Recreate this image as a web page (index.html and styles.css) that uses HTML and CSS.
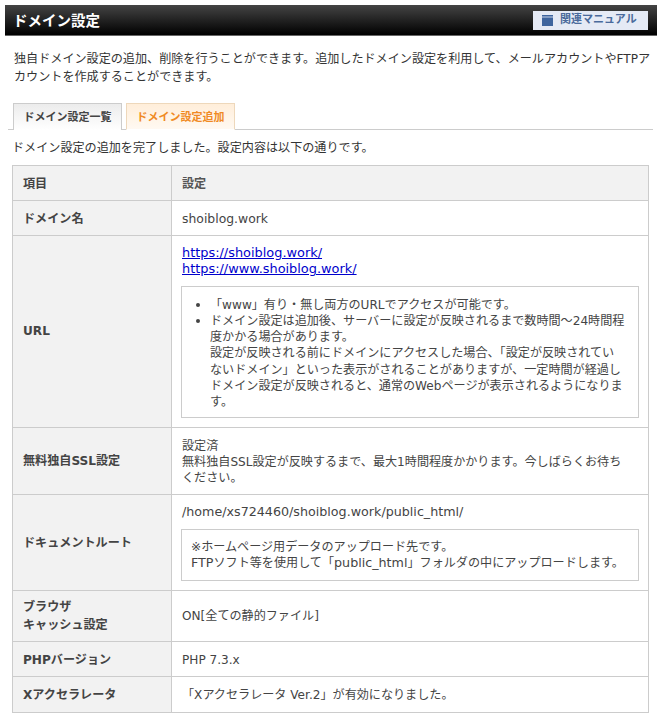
FILE: index.html
```html
<!DOCTYPE html>
<html lang="ja">
<head>
<meta charset="utf-8">
<title>ドメイン設定</title>
<link rel="stylesheet" href="styles.css">
</head>
<body>
<div class="header">
  <h1 class="title">ドメイン設定</h1>
  <a class="manual"><svg class="book" viewBox="0 0 11 11" width="11" height="11"><path d="M0 0H11V11H0Z" fill="#3f659e"/><path d="M0 2H11" stroke="#c9d5ea" stroke-width="1"/></svg>関連マニュアル</a>
</div>
<p class="lead">独自ドメイン設定の追加、削除を行うことができます。追加したドメイン設定を利用して、メールアカウントやFTPアカウントを作成することができます。</p>
<div class="tabs">
  <div class="tab">ドメイン設定一覧</div>
  <div class="tab active">ドメイン設定追加</div>
</div>
<p class="done">ドメイン設定の追加を完了しました。設定内容は以下の通りです。</p>
<table class="info">
  <tr class="r35"><th>項目</th><th class="head2">設定</th></tr>
  <tr class="r35"><th>ドメイン名</th><td class="host">shoiblog.work</td></tr>
  <tr><th>URL</th><td class="url">
    <a class="link" href="#">https://shoiblog.work/</a><br>
    <a class="link" href="#">https://www.shoiblog.work/</a>
    <div class="note list">
      <ul>
        <li>「www」有り・無し両方のURLでアクセスが可能です。</li>
        <li>ドメイン設定は追加後、サーバーに設定が反映されるまで数時間～24時間程度かかる場合があります。<br>設定が反映される前にドメインにアクセスした場合、「設定が反映されていないドメイン」といった表示がされることがありますが、一定時間が経過しドメイン設定が反映されると、通常のWebページが表示されるようになります。</li>
      </ul>
    </div>
  </td></tr>
  <tr><th>無料独自SSL設定</th><td class="narrow">設定済<br>無料独自SSL設定が反映するまで、最大1時間程度かかります。今しばらくお待ちください。</td></tr>
  <tr><th>ドキュメントルート</th><td><span class="path">/home/xs724460/shoiblog.work/public_html/</span>
    <div class="note">※ホームページ用データのアップロード先です。<br><span class="path">FTP</span>ソフト等を使用して「<span class="path">public_html</span>」フォルダの中にアップロードします。</div>
  </td></tr>
  <tr><th class="tall">ブラウザ<br>キャッシュ設定</th><td>ON[全ての静的ファイル]</td></tr>
  <tr class="r35"><th>PHPバージョン</th><td>PHP 7.3.x</td></tr>
  <tr class="r36"><th>Xアクセラレータ</th><td>「Xアクセラレータ Ver.2」が有効になりました。</td></tr>
</table>
</body>
</html>
```
FILE: styles.css
```css
* { box-sizing: border-box; }
html, body { margin: 0; padding: 0; background: #fff; }
body {
  width: 662px;
  height: 717px;
  overflow: hidden;
  padding-top: 5px;
  font-family: "DejaVu Sans", "Noto Sans CJK JP", sans-serif;
  font-size: 12.1px;
  line-height: 16.1px;
  color: #444;
}
.header {
  margin: 0 5px;
  height: 31px;
  display: flex;
  align-items: center;
  justify-content: space-between;
  padding: 0 9px 0 8px;
  background: linear-gradient(#444, #000);
  border-bottom: 1px solid #666;
}
.title { margin: 0; font-family: "Noto Sans CJK JP", sans-serif; font-size: 14.5px; font-weight: 700; color: #fff; }
.manual {
  display: flex;
  align-items: center;
  gap: 7px;
  width: 115px;
  height: 19px;
  padding-left: 9px;
  background: #e5eaf5;
  color: #4a6a9c;
  font-size: 11px;
  font-weight: 700;
}
.lead { margin: 14px 5px 0 14px; line-height: 18px; width: 644px; color: #333; }
.tabs {
  display: flex;
  gap: 4px;
  margin: 17px 9px 0 8px;
  padding-left: 5px;
  border-bottom: 1px solid #ccc;
  height: 27px;
}
.tab {
  width: 109px;
  height: 27px;
  text-align: center;
  line-height: 27px;
  font-size: 11px;
  background: linear-gradient(#ececec, #fff);
  border: 1px solid #ccc;
  border-bottom: 0;
  color: #444;
  font-weight: 700;
}
.tab.active {
  background: linear-gradient(#ffeeda, #fff9f2);
  border-color: #eed8bb;
  color: #f08a24;
  border-bottom: 1px solid #fff;
}
.done { margin: 10px 0 0 12px; line-height: 17px; color: #333; }
.info {
  margin: 8px 0 0 12px;
  width: 637px;
  border-collapse: collapse;
  table-layout: fixed;
}
.info th, .info td {
  border: 1px solid #ccc;
  padding: 9px 10px;
  text-align: left;
  font-weight: 400;
}
.info th { width: 159px; background: #f2f2f2; font-weight: 700; color: #444; }
.info th.head2 { width: auto; font-weight: 700; color: #555; }
.info th.tall { line-height: 17.4px; padding-top: 8px; padding-bottom: 7px; }
.r35 th, .r35 td { height: 35px; padding-top: 2px; padding-bottom: 0; }
.r36 th, .r36 td { height: 36px; padding-top: 1px; padding-bottom: 0; }
.info td.url { padding-bottom: 9px; }
.info td.narrow { padding-top: 10px; padding-bottom: 8px; padding-right: 22px; }
.info td.host { font-size: 12.4px; }
.link { color: #00c; text-decoration: underline; font-size: 12.9px; }
.path { font-size: 12.7px; }
.note { margin: 9px -1px 0 -1px; border: 1px solid #ccc; padding: 9px 9px; }
.note.list { padding: 10px 12px 7px 10px; }
.note ul { margin: 0; padding-left: 18px; list-style: none; }
.note li { position: relative; }
.note li::before {
  content: "";
  position: absolute;
  left: -14px;
  top: 6px;
  width: 4px;
  height: 4px;
  border-radius: 50%;
  background: #444;
}
```
